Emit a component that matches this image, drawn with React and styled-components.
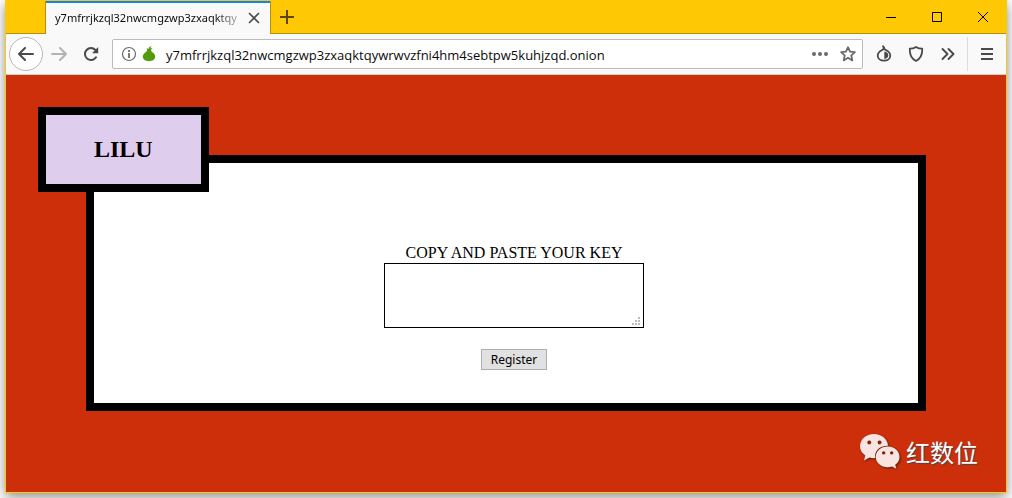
import React from "react";
import styled, { createGlobalStyle } from "styled-components";

const UI = '"Open Sans", "Noto Sans", sans-serif';
const UI_SMALL = '"Noto Sans", "Open Sans", sans-serif';
const SERIF = '"Liberation Serif", serif';

const GlobalStyle = createGlobalStyle`
  *, *::before, *::after { box-sizing: border-box; }
  body { margin: 0; background: #fff; overflow: hidden; }
`;

const Desktop = styled.div`
  padding: 0 5px 5px;
`;

const BrowserWindow = styled.div`
  border: 1px solid #ffc805;
  border-top: 0;
  box-shadow: 0 4px 12px rgba(0, 0, 0, 0.45);
  background: #cd2f0a;
`;

const TitleBar = styled.header`
  display: flex;
  height: 34px;
  padding-left: 39px;
  background: #ffc805;
  box-shadow: inset 0 -1px #b88f0c;
`;

const Tab = styled.div`
  display: flex;
  align-items: center;
  width: 226px;
  margin-top: 1px;
  padding: 0 6px 0 9px;
  background: #f9f9fa;
  border: solid #b88f0c;
  border-width: 0 1px;
  box-shadow: inset 0 2px #0a84ff;
`;

const TabTitle = styled.span`
  flex: 1;
  min-width: 0;
  white-space: nowrap;
  font: 11px/20px ${UI_SMALL};
  color: #0c0c0d;
  mask-image: linear-gradient(to right, #000 160px, transparent 192px);
`;

const IconButton = styled.button`
  display: flex;
  flex: none;
  align-items: center;
  justify-content: center;
  width: ${(p) => p.$w || 32}px;
  height: ${(p) => p.$h || 34}px;
  padding: 0;
  border: 0;
  background: none;
  color: ${(p) => p.$color || "#4a4a4b"};
  svg { display: block; }
`;

const WindowControls = styled.div`
  display: flex;
  margin-left: auto;
`;

const Toolbar = styled.nav`
  display: flex;
  align-items: center;
  height: 41px;
  padding: 0 1px 0 3px;
  background: #f9f9fa;
  border-bottom: 1px solid #d0d0d1;
`;

const BackButton = styled(IconButton)`
  border: 1px solid #b8b8b9;
  border-radius: 50%;
  background: #fff;
`;

const AddressBar = styled.div`
  display: flex;
  flex: 1;
  align-items: center;
  min-width: 0;
  height: 30px;
  margin: 0 5px;
  padding: 0 0 0 8px;
  background: #fff;
  border: 1px solid #bcbcbc;
  border-radius: 2px;
`;

const AddressInput = styled.input`
  flex: 1;
  min-width: 0;
  height: 26px;
  margin-left: 5px;
  padding: 2px 0 0;
  border: 0;
  outline: 0;
  background: none;
  font: 13px/24px ${UI};
  color: #0c0c0d;
`;

const Divider = styled.span`
  width: 1px;
  height: 34px;
  margin-left: 3px;
  background: #dcdcdd;
`;

const Page = styled.main`
  padding: 32px 80px 22px;
`;

const Heading = styled.h1`
  position: relative;
  width: fit-content;
  margin: 0 0 -37px -48px;
  padding: 20px 48px 21px;
  border: 8px solid #000;
  background: #dfcdee;
  font: bold 24px/28px ${SERIF};
  color: #000;
`;

const Card = styled.form`
  display: flex;
  flex-direction: column;
  align-items: center;
  padding: 80px 32px 33px 48px;
  border: 8px solid #000;
  background: #fff;
`;

const KeyLabel = styled.label`
  font: 16px/20px ${SERIF};
  color: #000;
`;

const KeyField = styled.div`
  position: relative;
  display: flex;
  width: 260px;
  margin-bottom: 21px;
`;

const KeyInput = styled.textarea`
  width: 100%;
  height: 65px;
  padding: 2px;
  border: 1px solid #000;
  background: #fff;
  resize: none;
`;

const Grip = styled.svg`
  position: absolute;
  right: 4px;
  bottom: 3px;
`;

const RegisterButton = styled.button`
  height: 21px;
  padding: 1px 9px 0;
  border: 1px solid #adadad;
  background: #e1e1e1;
  font: 12px/18px ${UI_SMALL};
  color: #000;
`;

const Watermark = styled.footer`
  display: flex;
  align-items: center;
  justify-content: flex-end;
  gap: 6px;
  margin-right: -52px;
  padding-top: 23px;
  font: 24px/36px "Noto Sans CJK SC", sans-serif;
  color: #fff;
  text-shadow: 1px 1px 1px #444;
`;

const stroke = { fill: "none", stroke: "currentColor" };

const CloseIcon = () => (
  <svg width="12" height="12" viewBox="0 0 12 12" {...stroke} strokeWidth="1.7" strokeLinecap="round"><path d="M1.5 1.5l9 9M10.5 1.5l-9 9" /></svg>
);
const PlusIcon = () => (
  <svg width="14" height="14" viewBox="0 0 14 14" {...stroke} strokeWidth="2"><path d="M7 0v14M0 7h14" /></svg>
);
const ArrowIcon = ({ flip }) => (
  <svg width="16" height="16" viewBox="0 0 16 16" {...stroke} strokeWidth="2" strokeLinecap="round" strokeLinejoin="round">
    <path d={flip ? "M1 8h14M9 2l6 6-6 6" : "M15 8H1M7 2L1 8l6 6"} />
  </svg>
);
const ReloadIcon = () => (
  <svg width="16" height="16" viewBox="0 0 16 16">
    <path d="M13 11.3A6 6 0 1 1 12.4 4" {...stroke} strokeWidth="2" strokeLinecap="round" />
    <path d="M15.2 1v6.2H9z" fill="currentColor" />
  </svg>
);
const InfoIcon = () => (
  <svg width="16" height="16" viewBox="0 0 16 16" {...stroke}>
    <circle cx="8" cy="8" r="6.5" strokeWidth="1.2" /><path d="M8 7v5M8 4v2" strokeWidth="1.8" />
  </svg>
);
const OnionIcon = () => (
  <svg width="14" height="16" viewBox="0 0 14 16" fill="#529b0c">
    <path d="M9.500 0C7.500.7 6.600 1.700 6.600 3L4.600 2.200C5.300 3.500 5.300 4.500 4.500 5.500 2.800 7 .8 8 .8 10.600c0 3 2.600 4.600 6.200 4.600s6.200-1.600 6.200-4.600c0-2.600-2-3.700-3.700-5.100C8.800 4.500 9 3.500 10.600 2L8.500 2.500C8.500 1.500 8.900.8 9.500 0z" />
  </svg>
);
const DotsIcon = () => (
  <svg width="16" height="16" viewBox="0 0 16 16" fill="currentColor"><circle cx="2" cy="8" r="2" /><circle cx="8" cy="8" r="2" /><circle cx="14" cy="8" r="2" /></svg>
);
const StarIcon = () => (
  <svg width="16" height="16" viewBox="0 0 16 16" {...stroke} strokeWidth="1.8" strokeLinejoin="round">
    <path d="M8 1.200l2 4.400 4.900.5-3.600 3.300 1 5L8 11.800l-4.300 2.600 1-5L1.100 6.100 6 5.600z" />
  </svg>
);
const TorIcon = () => (
  <svg width="16" height="18" viewBox="0 0 16 18">
    <path d="M7 1.200C8 2 8.400 3 8.600 4.300L12.300 6.600c1.300 1 2 2.300 2 3.800 0 3.300-2.800 5.300-6.300 5.300s-6.300-2-6.300-5.300c0-1.500.7-2.800 2-3.800L7.400 4.200C7.800 3.200 7.700 2.200 7 1.200z" {...stroke} strokeWidth="1.800" strokeLinejoin="round" />
    <path d="M8.300 6.600v7.400c2.500-.2 4-1.700 4-3.700s-1.500-3.500-4-3.700z" fill="currentColor" />
  </svg>
);
const ShieldIcon = () => (
  <svg width="16" height="16" viewBox="0 0 16 16" {...stroke} strokeWidth="1.8" strokeLinejoin="round">
    <path d="M8 1c2 1.300 4 1.700 6.200 1.700C14.500 9 12.500 13 8 15 3.500 13 1.500 9 1.800 2.700 4 2.700 6 2.300 8 1z" />
  </svg>
);
const ChevronsIcon = () => (
  <svg width="14" height="14" viewBox="0 0 14 14" {...stroke} strokeWidth="1.900" strokeLinecap="round" strokeLinejoin="round"><path d="M1.500 2l5 5-5 5M7.500 2l5 5-5 5" /></svg>
);
const MenuIcon = () => (
  <svg width="12" height="12" viewBox="0 0 12 12" {...stroke} strokeWidth="2"><path d="M0 1h12M0 6h12M0 11h12" /></svg>
);
const ChatIcon = () => (
  <svg width="40" height="36" viewBox="0 0 40 36" style={{ filter: "drop-shadow(1px 1px 1px #551b0b)" }}>
    <path fill="#f8e5e2" fillRule="evenodd" d="M14 0C6.300 0 0 5.300 0 12.200c0 3.700 2 7 5.300 9.200L4 26.500l5.400-3c2 .6 4 .8 6 .6-1.700-7 4.700-12.600 12.600-12.300C27.500 5 21.500 0 14 0zM9.300 6.500a2 2 0 1 1 0 4 2 2 0 0 1 0-4zm10.300 0a2 2 0 1 1 0 4 2 2 0 0 1 0-4z" />
    <path fill="#f8e5e2" fillRule="evenodd" d="M27.700 12.500c-6.600 0-11.900 4.600-11.900 10.400S21.100 33.200 27.700 33.200c1.500 0 3-.2 4.400-.7l4.300 2.200-1.200-3.900c2.700-2 4.300-4.700 4.300-7.900 0-5.800-5.200-10.400-11.800-10.400zm-4 4.700a1.700 1.700 0 1 1 0 3.400 1.700 1.700 0 0 1 0-3.400zm8 0a1.700 1.700 0 1 1 0 3.400 1.700 1.700 0 0 1 0-3.400z" />
  </svg>
);

export default function App() {
  return (
    <Desktop>
      <GlobalStyle />
      <BrowserWindow>
        <TitleBar>
          <Tab>
            <TabTitle>y7mfrrjkzql32nwcmgzwp3zxaqktqy</TabTitle>
            <IconButton $w={20} $h={20} aria-label="Close tab"><CloseIcon /></IconButton>
          </Tab>
          <IconButton aria-label="New tab" $color="#5a4804"><PlusIcon /></IconButton>
          <WindowControls>
            <IconButton $w={46} $color="#000" aria-label="Minimize"><svg width="10" height="10" {...stroke}><path d="M0 5.500h10" /></svg></IconButton>
            <IconButton $w={46} $color="#000" aria-label="Maximize"><svg width="10" height="10" {...stroke}><path d="M.5.5h9v9h-9z" /></svg></IconButton>
            <IconButton $w={46} $color="#000" aria-label="Close window"><svg width="10" height="10" {...stroke}><path d="M0 0l10 10M10 0L0 10" /></svg></IconButton>
          </WindowControls>
        </TitleBar>
        <Toolbar>
          <BackButton $w={34} aria-label="Back"><ArrowIcon /></BackButton>
          <IconButton $color="#b3b3b4" aria-label="Forward"><ArrowIcon flip /></IconButton>
          <IconButton aria-label="Reload"><ReloadIcon /></IconButton>
          <AddressBar>
            <IconButton $w={16} $h={28} $color="#6a6a6b" aria-label="Site information"><InfoIcon /></IconButton>
            <IconButton $w={24} $h={28} aria-label="Onion site"><OnionIcon /></IconButton>
            <AddressInput aria-label="Address" defaultValue="y7mfrrjkzql32nwcmgzwp3zxaqktqywrwvzfni4hm4sebtpw5kuhjzqd.onion" />
            <IconButton $w={28} $h={28} $color="#6a6a6b" aria-label="Page actions"><DotsIcon /></IconButton>
            <IconButton $w={28} $h={28} $color="#6a6a6b" aria-label="Bookmark"><StarIcon /></IconButton>
          </AddressBar>
          <IconButton aria-label="Tor"><TorIcon /></IconButton>
          <IconButton aria-label="Security level"><ShieldIcon /></IconButton>
          <IconButton aria-label="More tools"><ChevronsIcon /></IconButton>
          <Divider />
          <IconButton $w={37} aria-label="Menu"><MenuIcon /></IconButton>
        </Toolbar>
        <Page>
          <Heading>LILU</Heading>
          <Card onSubmit={(e) => e.preventDefault()}>
            <KeyLabel htmlFor="key">COPY AND PASTE YOUR KEY</KeyLabel>
            <KeyField>
              <KeyInput id="key" />
              <Grip width="8" height="8" fill="#bcbcbc" aria-hidden="true"><path d="M6 0h2v2H6zM3 3h2v2H3zM6 3h2v2H6zM0 6h2v2H0zM3 6h2v2H3zM6 6h2v2H6z" /></Grip>
            </KeyField>
            <RegisterButton type="submit">Register</RegisterButton>
          </Card>
          <Watermark><ChatIcon /><span>红数位</span></Watermark>
        </Page>
      </BrowserWindow>
    </Desktop>
  );
}
